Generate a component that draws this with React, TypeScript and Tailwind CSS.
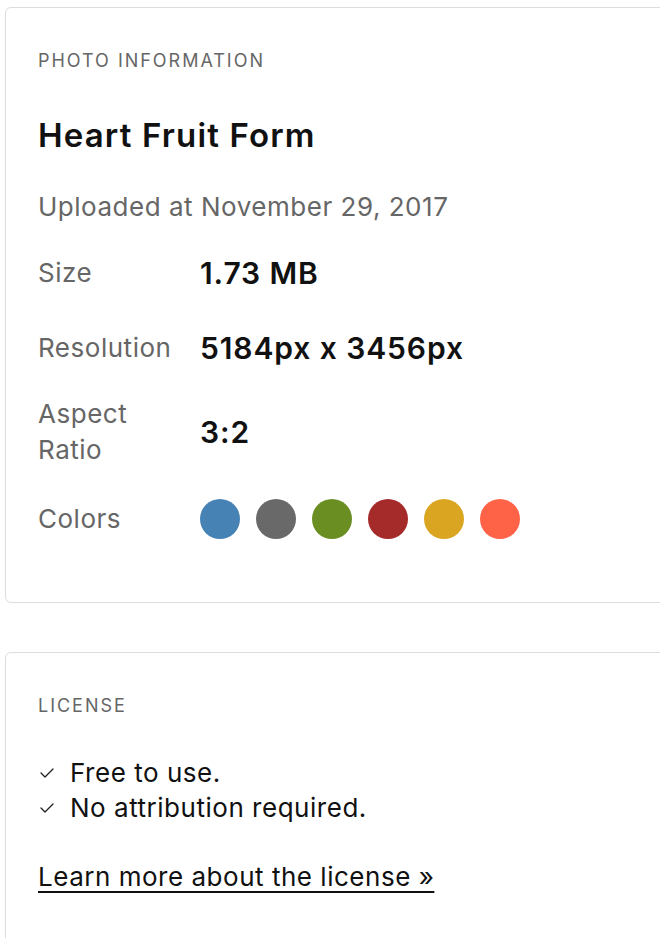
const colors = ["#4682b4", "#696969", "#6b8e23", "#a52a2a", "#daa520", "#ff6347"];

const Check = () => (
  <svg width="14" height="10" viewBox="0 0 14 10" fill="none" className="ml-[2px] mr-[16px] shrink-0">
    <polyline points="1,5 5,9 13,1" stroke="#222" strokeWidth="1.3" strokeLinecap="round" strokeLinejoin="round" />
  </svg>
);

export default function App() {
  return (
    <div className="min-h-[938px] bg-white pl-[5px] pt-[7px] font-['Inter',sans-serif] overflow-hidden">
      {/* Photo information */}
      <div className="w-[700px] rounded-[6px] border border-[#dddddd] px-[32px] pt-[41px] pb-[43px]">
        <p className="text-[18px] leading-[24px] tracking-[0.11em] text-[#666]">PHOTO INFORMATION</p>
        <h2 className="mt-[42px] text-[33px] leading-[40px] tracking-[0.035em] font-semibold text-[#111]">Heart Fruit Form</h2>
        <p className="mt-[34px] text-[26px] leading-[36px] tracking-[0.02em] text-[#666]">Uploaded at November 29, 2017</p>

        <div className="mt-[10px]">
          <div className="flex h-[75px] items-center">
            <span className="w-[162px] text-[26px] leading-[36px] tracking-[0.02em] text-[#666]">Size</span>
            <span className="text-[30px] leading-[36px] tracking-[0.03em] font-semibold text-[#111]">1.73 MB</span>
          </div>
          <div className="flex h-[75px] items-center">
            <span className="w-[162px] text-[26px] leading-[36px] tracking-[0.02em] text-[#666]">Resolution</span>
            <span className="text-[30px] leading-[36px] tracking-[0.03em] font-semibold text-[#111]">5184px x 3456px</span>
          </div>
          <div className="flex h-[93px] items-center">
            <span className="w-[162px] text-[26px] leading-[36px] tracking-[0.02em] text-[#666]">
              Aspect
              <br />
              Ratio
            </span>
            <span className="text-[30px] leading-[36px] tracking-[0.03em] font-semibold text-[#111]">3:2</span>
          </div>
          <div className="flex h-[81px] items-center">
            <span className="w-[162px] text-[26px] leading-[36px] tracking-[0.02em] text-[#666]">Colors</span>
            <div className="flex gap-[16px]">
              {colors.map((c) => (
                <span key={c} className="h-[40px] w-[40px] rounded-full" style={{ backgroundColor: c }} />
              ))}
            </div>
          </div>
        </div>
      </div>

      {/* License */}
      <div className="mt-[49px] w-[700px] rounded-[6px] border border-[#dddddd] px-[32px] pt-[41px] pb-[60px]">
        <p className="text-[18px] leading-[24px] tracking-[0.11em] text-[#666]">LICENSE</p>
        <ul className="mt-[37px] text-[26px] leading-[35px] tracking-[0.02em] text-[#111]">
          <li className="flex items-center">
            <Check />
            Free to use.
          </li>
          <li className="flex items-center">
            <Check />
            No attribution required.
          </li>
        </ul>
        <a href="#" className="mt-[34px] block text-[26px] leading-[35px] tracking-[0.02em] text-[#111] underline underline-offset-[5px] decoration-[2px]">
          Learn more about the license »
        </a>
      </div>
    </div>
  );
}
